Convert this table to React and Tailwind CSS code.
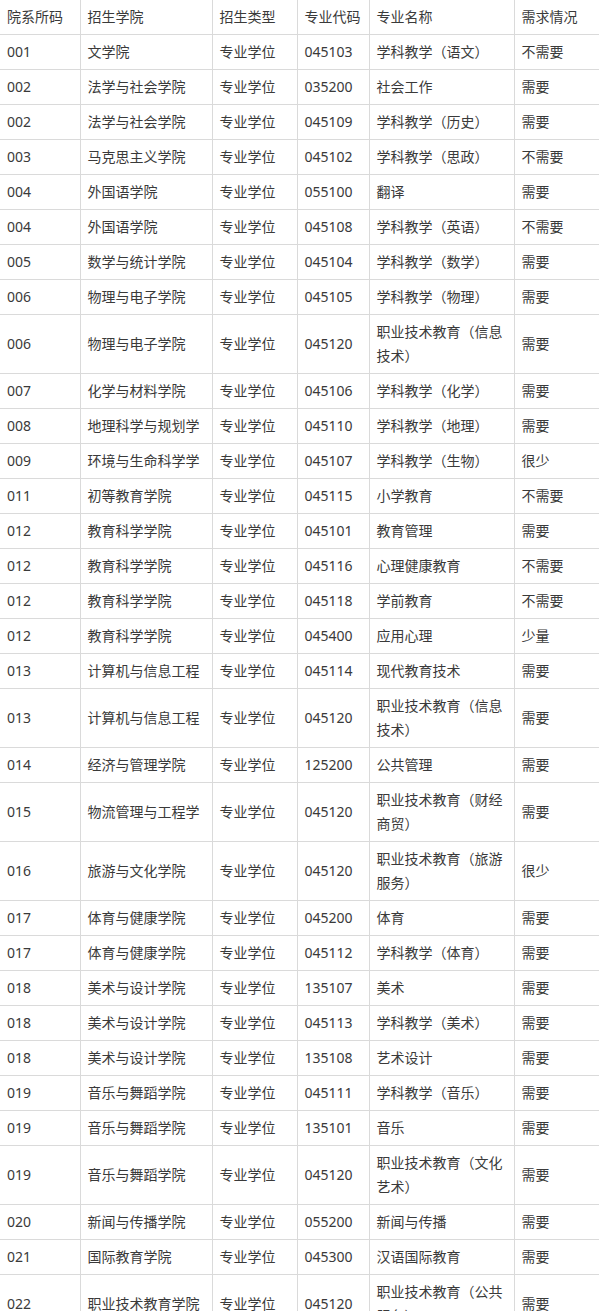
import React from "react";

const rows = [
  ["001", "文学院", "专业学位", "045103", "学科教学（语文）", "不需要"],
  ["002", "法学与社会学院", "专业学位", "035200", "社会工作", "需要"],
  ["002", "法学与社会学院", "专业学位", "045109", "学科教学（历史）", "需要"],
  ["003", "马克思主义学院", "专业学位", "045102", "学科教学（思政）", "不需要"],
  ["004", "外国语学院", "专业学位", "055100", "翻译", "需要"],
  ["004", "外国语学院", "专业学位", "045108", "学科教学（英语）", "不需要"],
  ["005", "数学与统计学院", "专业学位", "045104", "学科教学（数学）", "需要"],
  ["006", "物理与电子学院", "专业学位", "045105", "学科教学（物理）", "需要"],
  ["006", "物理与电子学院", "专业学位", "045120", "职业技术教育（信息技术）", "需要"],
  ["007", "化学与材料学院", "专业学位", "045106", "学科教学（化学）", "需要"],
  ["008", "地理科学与规划学", "专业学位", "045110", "学科教学（地理）", "需要"],
  ["009", "环境与生命科学学", "专业学位", "045107", "学科教学（生物）", "很少"],
  ["011", "初等教育学院", "专业学位", "045115", "小学教育", "不需要"],
  ["012", "教育科学学院", "专业学位", "045101", "教育管理", "需要"],
  ["012", "教育科学学院", "专业学位", "045116", "心理健康教育", "不需要"],
  ["012", "教育科学学院", "专业学位", "045118", "学前教育", "不需要"],
  ["012", "教育科学学院", "专业学位", "045400", "应用心理", "少量"],
  ["013", "计算机与信息工程", "专业学位", "045114", "现代教育技术", "需要"],
  ["013", "计算机与信息工程", "专业学位", "045120", "职业技术教育（信息技术）", "需要"],
  ["014", "经济与管理学院", "专业学位", "125200", "公共管理", "需要"],
  ["015", "物流管理与工程学", "专业学位", "045120", "职业技术教育（财经商贸）", "需要"],
  ["016", "旅游与文化学院", "专业学位", "045120", "职业技术教育（旅游服务）", "很少"],
  ["017", "体育与健康学院", "专业学位", "045200", "体育", "需要"],
  ["017", "体育与健康学院", "专业学位", "045112", "学科教学（体育）", "需要"],
  ["018", "美术与设计学院", "专业学位", "135107", "美术", "需要"],
  ["018", "美术与设计学院", "专业学位", "045113", "学科教学（美术）", "需要"],
  ["018", "美术与设计学院", "专业学位", "135108", "艺术设计", "需要"],
  ["019", "音乐与舞蹈学院", "专业学位", "045111", "学科教学（音乐）", "需要"],
  ["019", "音乐与舞蹈学院", "专业学位", "135101", "音乐", "需要"],
  ["019", "音乐与舞蹈学院", "专业学位", "045120", "职业技术教育（文化艺术）", "需要"],
  ["020", "新闻与传播学院", "专业学位", "055200", "新闻与传播", "需要"],
  ["021", "国际教育学院", "专业学位", "045300", "汉语国际教育", "需要"],
  ["022", "职业技术教育学院", "专业学位", "045120", "职业技术教育（公共服务）", "需要"],
];

const head = ["院系所码", "招生学院", "招生类型", "专业代码", "专业名称", "需求情况"];

function Cell({ children, first, top, th, wrap }) {
  const Tag = th ? "th" : "td";
  return (
    <Tag
      className={
        "border border-[#dadada] px-[7px] py-[5px] text-left align-middle font-normal leading-[24px] " +
        (wrap ? "" : "whitespace-nowrap ") +
        (first ? "border-l-0 " : "") +
        (top ? "border-t-0 " : "")
      }
    >
      {children}
    </Tag>
  );
}

export default function App() {
  return (
    <div
      className="w-[599px] bg-white text-[14px] text-[#3a3a3a]"
      style={{ fontFamily: '"Noto Sans", "Noto Sans CJK SC", sans-serif' }}
    >
      <table className="w-[599px] table-fixed border-collapse">
        <colgroup>
          <col className="w-[80px]" />
          <col className="w-[132px]" />
          <col className="w-[85px]" />
          <col className="w-[72px]" />
          <col className="w-[145px]" />
          <col className="w-[85px]" />
        </colgroup>
        <thead>
          <tr>
            {head.map((h, i) => (
              <Cell key={i} th top first={i === 0}>
                {h}
              </Cell>
            ))}
          </tr>
        </thead>
        <tbody>
          {rows.map((r, ri) => (
            <tr key={ri}>
              {r.map((c, ci) => (
                <Cell key={ci} first={ci === 0} wrap={ci === 4}>
                  {c}
                </Cell>
              ))}
            </tr>
          ))}
        </tbody>
      </table>
    </div>
  );
}
